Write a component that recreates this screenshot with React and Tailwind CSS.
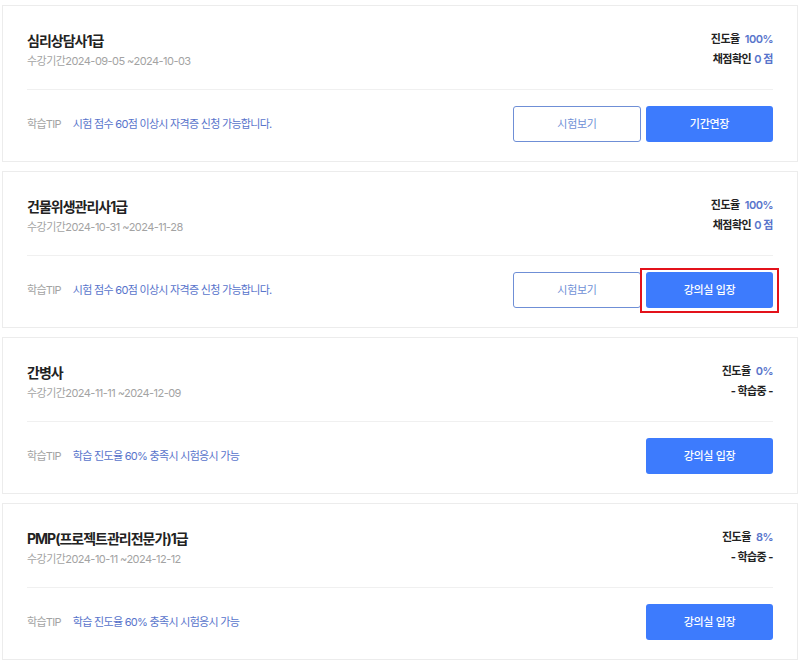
import React from 'react';

const courses = [
  {
    id: 1,
    title: '심리상담사1급',
    period: '2024-09-05 ~2024-10-03',
    progress: '100%',
    status: 'score',
    tip: '시험 점수 60점 이상시 자격증 신청 가능합니다.',
    buttons: ['exam', 'extend'],
  },
  {
    id: 2,
    title: '건물위생관리사1급',
    period: '2024-10-31 ~2024-11-28',
    progress: '100%',
    status: 'score',
    tip: '시험 점수 60점 이상시 자격증 신청 가능합니다.',
    buttons: ['exam', 'enter'],
    highlight: true,
  },
  {
    id: 3,
    title: '간병사',
    period: '2024-11-11 ~2024-12-09',
    progress: '0%',
    status: 'studying',
    tip: '학습 진도율 60% 충족시 시험응시 가능',
    buttons: ['enter'],
  },
  {
    id: 4,
    title: 'PMP(프로젝트관리전문가)1급',
    period: '2024-10-11 ~2024-12-12',
    progress: '8%',
    status: 'studying',
    tip: '학습 진도율 60% 충족시 시험응시 가능',
    buttons: ['enter'],
  },
];

const OutlineButton = ({ children }) => (
  <button className="w-[128px] h-[36px] rounded-[3px] border border-[#6f8fd6] bg-white text-[11px] tracking-[-0.3px] text-[#6f8fd6]">
    {children}
  </button>
);

const PrimaryButton = ({ children, highlight }) => (
  <div className="relative">
    <button className="w-[127px] h-[36px] rounded-[3px] bg-[#3d7bfd] text-[11px] font-medium tracking-[-0.3px] text-white">
      {children}
    </button>
    {highlight && (
      <div className="absolute -left-[6px] -right-[6px] -top-[4px] -bottom-[5px] border-2 border-[#e3121b] pointer-events-none" />
    )}
  </div>
);

const CourseCard = ({ course }) => (
  <div className="ml-[2px] w-[796px] border border-[#ececec] bg-white px-6 pt-6 pb-[19px]">
    <div className="flex items-start justify-between pb-[19px] border-b border-[#f0f0f0]">
      <div>
        <h3 className="text-[14px] leading-[22px] font-bold text-[#222] tracking-[-1px]">{course.title}</h3>
        <p className="text-[11px] leading-[18px] text-[#a3a3a3] tracking-[-0.55px]">수강기간{course.period}</p>
      </div>
      <div className="-mt-px text-right text-[11px] leading-[20px] font-bold text-[#222] tracking-[-0.5px]">
        <div>
          진도율 <span className="ml-[3px] font-semibold text-[#5874cb]">{course.progress}</span>
        </div>
        {course.status === 'score' ? (
          <div>
            채점확인 <span className="ml-px font-semibold text-[#5874cb]">0 점</span>
          </div>
        ) : (
          <div>- 학습중 -</div>
        )}
      </div>
    </div>
    <div className="flex items-center justify-between pt-4">
      <div className="flex items-center gap-[12px] text-[11px] tracking-[-0.7px]">
        <span className="text-[#a3a3a3]">학습TIP</span>
        <span className="text-[#5874cb]">{course.tip}</span>
      </div>
      <div className="flex gap-[5px]">
        {course.buttons.includes('exam') && <OutlineButton>시험보기</OutlineButton>}
        {course.buttons.includes('extend') && <PrimaryButton>기간연장</PrimaryButton>}
        {course.buttons.includes('enter') && (
          <PrimaryButton highlight={course.highlight}>강의실 입장</PrimaryButton>
        )}
      </div>
    </div>
  </div>
);

export default function App() {
  return (
    <div
      className="min-h-screen bg-white pt-[5px] flex flex-col gap-[9px]"
      style={{ fontFamily: 'Inter, "Noto Sans CJK KR", sans-serif' }}
    >
      {courses.map(course => (
        <CourseCard key={course.id} course={course} />
      ))}
    </div>
  );
}
